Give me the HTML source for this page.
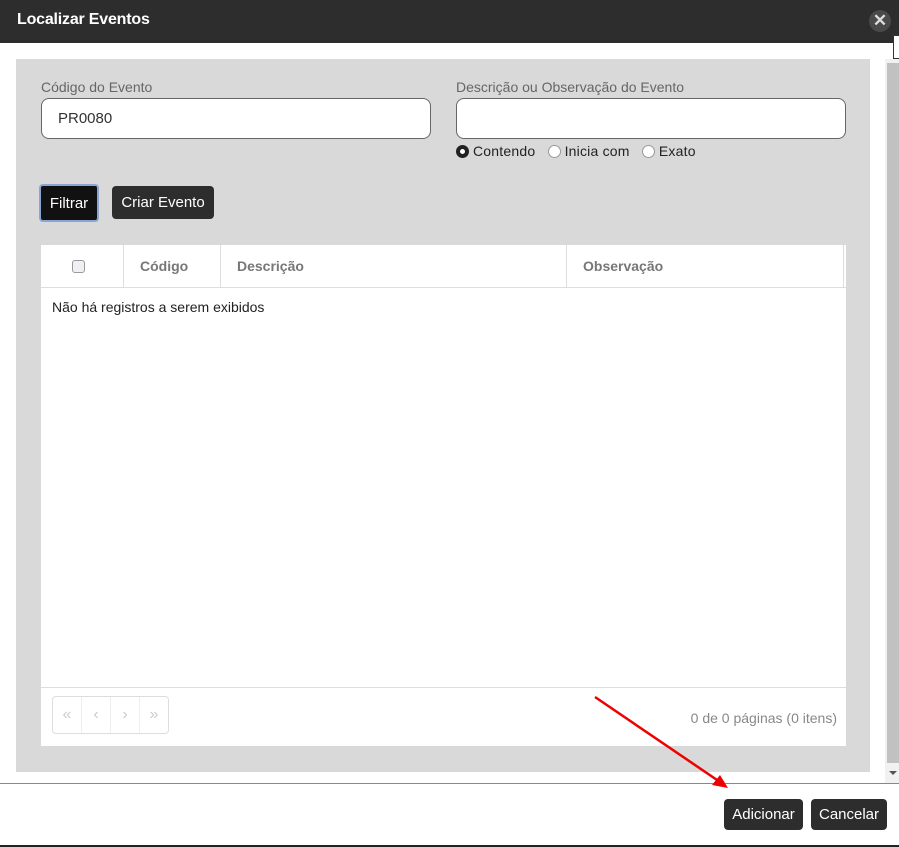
<!DOCTYPE html>
<html><head><meta charset="utf-8"><style>
*{box-sizing:border-box;margin:0;padding:0}
body{width:899px;height:847px;overflow:hidden;background:#fff;font-family:"Liberation Sans",Arial,sans-serif;position:relative}
.abs{position:absolute}
.title{left:0;top:0;width:899px;height:43px;background:#2d2d2d;color:#fff;font-weight:bold;font-size:16px;padding:11px 17px;letter-spacing:-0.2px}
.close{left:869px;top:10px;width:22px;height:22px;border-radius:50%;background:#4a4a4a;color:#ddd;font-size:17px;font-weight:bold;text-align:center;line-height:22px}
.panel{left:16px;top:59px;width:854px;height:713px;background:#d9d9d9}
.lbl{font-size:14px;color:#666}
.inp{background:#fff;border:1px solid #666;border-radius:8px;height:41px;font-size:15px;color:#333;padding:11px 16px}
.btn{background:#2d2d2d;color:#fff;font-size:15px;border-radius:4px;text-align:center}
.tbl{left:41px;top:245px;width:805px;height:501px;background:#fff}
.th{top:0;height:42px;border-right:1px solid #ddd;font-size:14px;font-weight:bold;color:#777;padding:13px 16px}
.radio{display:inline-block;width:13px;height:13px;border-radius:50%;border:1px solid #999;background:#fff;vertical-align:-2px;margin-right:4px}
</style></head><body>
<div class="abs title">Localizar Eventos</div>
<div class="abs close">✕</div>
<div class="abs" style="left:893px;top:35px;width:6px;height:24px;background:#fff;border:1px solid #333;border-right:none"></div>
<div class="abs panel"></div>
<div class="abs" style="left:885px;top:59px;width:14px;height:724px;background:#f1f1f1"></div>
<div class="abs" style="left:887px;top:63px;width:12px;height:700px;background:#c1c1c1"></div>
<div class="abs" style="left:889px;top:771px;width:0;height:0;border-left:4px solid transparent;border-right:4px solid transparent;border-top:4px solid #555"></div>
<div class="abs lbl" style="left:41px;top:79px">Código do Evento</div>
<div class="abs inp" style="left:41px;top:98px;width:390px">PR0080</div>
<div class="abs lbl" style="left:456px;top:79px">Descrição ou Observação do Evento</div>
<div class="abs inp" style="left:456px;top:98px;width:390px"></div>
<div class="abs" style="left:456px;top:143px;font-size:14px;color:#222;white-space:nowrap;letter-spacing:0.2px">
<span class="radio" style="border:4px solid #222"></span>Contendo&nbsp;&nbsp;&nbsp;<span class="radio"></span>Inicia com&nbsp;&nbsp;&nbsp;<span class="radio"></span>Exato</div>
<div class="abs btn" style="left:39px;top:184px;width:60px;height:38px;background:#111;border:2px solid #8aa4d6;padding-top:9px">Filtrar</div>
<div class="abs btn" style="left:112px;top:186px;width:102px;height:33px;padding-top:8px">Criar Evento</div>
<div class="abs tbl">
 <div class="abs" style="left:0;top:42px;width:805px;height:1px;background:#ddd"></div>
 <div class="abs th" style="left:0;width:83px"><span style="display:inline-block;width:13px;height:13px;border:1px solid #999;border-radius:3px;background:#eef0f3;margin-left:15px;vertical-align:-2px"></span></div>
 <div class="abs th" style="left:83px;width:97px">Código</div>
 <div class="abs th" style="left:180px;width:346px">Descrição</div>
 <div class="abs th" style="left:526px;width:277px">Observação</div>
 <div class="abs" style="left:11px;top:54px;font-size:14px;color:#222">Não há registros a serem exibidos</div>
 <div class="abs" style="left:0;top:442px;width:805px;height:1px;background:#ddd"></div>
 <div class="abs" style="left:11px;top:451px;width:117px;height:38px;border:1px solid #ddd;border-radius:4px;display:flex;color:#ccc;font-size:16px">
  <div style="flex:1;border-right:1px solid #eee;text-align:center;line-height:36px">«</div>
  <div style="flex:1;border-right:1px solid #eee;text-align:center;line-height:36px">‹</div>
  <div style="flex:1;border-right:1px solid #eee;text-align:center;line-height:36px">›</div>
  <div style="flex:1;text-align:center;line-height:36px">»</div>
 </div>
 <div class="abs" style="right:9px;top:465px;font-size:14px;color:#888">0 de 0 páginas (0 itens)</div>
</div>
<div class="abs" style="left:0;top:783px;width:899px;height:1px;background:#888"></div>
<div class="abs btn" style="left:724px;top:799px;width:79px;height:31px;padding-top:7px">Adicionar</div>
<div class="abs btn" style="left:811px;top:799px;width:76px;height:31px;padding-top:7px">Cancelar</div>
<div class="abs" style="left:0;top:845px;width:899px;height:2px;background:#222"></div>
<svg class="abs" style="left:0;top:0" width="899" height="847"><line x1="595" y1="697" x2="720" y2="782" stroke="#e00" stroke-width="2.5"/><polygon points="728,788 712,785 720,775" fill="#e00"/></svg>
</body></html>
